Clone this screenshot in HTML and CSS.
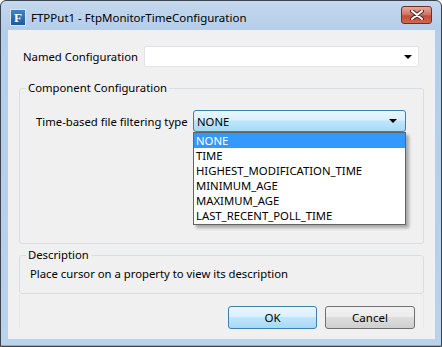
FILE: index.html
```html
<html>
    <head>
        <link rel="stylesheet" href="styles.css">
    </head>
    <body>
        <div class="window">
            <div class="titlebar">
                <span class="appicon">F</span>
                <span class="title">FTPPut1 - FtpMonitorTimeConfiguration</span>
                <span class="close">
                    <svg width="14" height="10" viewBox="0 0 14 10">
                        <path d="M2 1 L12 9 M12 1 L2 9" stroke="#4a2a26" stroke-width="4" stroke-linecap="round"/>
                        <path d="M2 1 L12 9 M12 1 L2 9" stroke="#fff" stroke-width="2" stroke-linecap="round"/>
                    </svg>
                </span>
            </div>

            <div class="client">
                <div class="named">
                    <span class="label">Named Configuration</span>
                    <div class="combo white">
                        <span class="value"></span>
                        <span class="arrow"></span>
                    </div>
                </div>

                <fieldset class="group component">
                    <legend>Component Configuration</legend>
                    <div class="row">
                        <span class="label">Time-based file filtering type</span>
                        <div class="selectwrap">
                            <div class="combo blue">
                                <span class="value">NONE</span>
                                <span class="arrow"></span>
                            </div>
                            <ul class="dropdown">
                                <li class="selected">NONE</li>
                                <li>TIME</li>
                                <li>HIGHEST_MODIFICATION_TIME</li>
                                <li>MINIMUM_AGE</li>
                                <li>MAXIMUM_AGE</li>
                                <li>LAST_RECENT_POLL_TIME</li>
                            </ul>
                        </div>
                    </div>
                </fieldset>

                <fieldset class="group description">
                    <legend>Description</legend>
                    <p>Place cursor on a property to view its description</p>
                </fieldset>

                <div class="buttons">
                    <button class="btn default">OK</button>
                    <button class="btn">Cancel</button>
                </div>
            </div>
        </div>
    </body>
</html>
```

FILE: styles.css
```css
body {
    margin: 0;
    background: #fff;
    font: 11.3px "Noto Sans", "Open Sans", sans-serif;
    color: #000;
}

.window {
    width: 440px;
    height: 345px;
    border: 1px solid #3c4450;
    border-radius: 6px 6px 0 0;
    background: linear-gradient(#c4d8ee, #b4cde9 30px, #bad2ea);
    box-shadow: inset 0 -1px 0 #5fc4d8;
}

.titlebar {
    height: 29px;
    display: flex;
    align-items: center;
    padding: 0 9px 0 9px;
}

.appicon {
    width: 14px;
    height: 15px;
    margin-top: 3px;
    background: linear-gradient(#3b86c8, #1d5a98);
    border: 1px solid #d8e6f4;
    color: #fff;
    font: bold 13px "Liberation Serif", serif;
    line-height: 15px;
    text-align: center;
}

.title {
    margin-left: 5px;
    margin-top: 3px;
    font-size: 11.5px;
    color: #000;
    flex: 1;
}

.close {
    width: 29px;
    height: 16px;
    margin-top: -1px;
    border: 1px solid #6e2f27;
    border-radius: 3px;
    background: linear-gradient(#e7a99c, #d0705f 50%, #c24a37 55%, #cf6a4e);
    display: flex;
    align-items: center;
    justify-content: center;
}

.client {
    margin: 0 6px 0 7px;
    height: 309px;
    background: #f0f0f0;
    padding: 16px 0 0 0;
    box-sizing: border-box;
}

.label {
    white-space: nowrap;
}

.named {
    display: flex;
    align-items: center;
    padding: 0 16px 0 15px;
}

.named .label {
    width: 121px;
}

.combo {
    height: 21px;
    box-sizing: border-box;
    display: flex;
    align-items: center;
    padding: 0 6px 0 3px;
}

.combo .value {
    flex: 1;
}

.arrow {
    width: 0;
    height: 0;
    border-left: 4px solid transparent;
    border-right: 4px solid transparent;
    border-top: 4px solid #000;
}

.white {
    flex: 1;
    background: #fff;
    border: 1px solid #e2e3ea;
    border-radius: 2px;
}

.blue {
    width: 213px;
    height: 22px;
    background: linear-gradient(#eaf6fd, #d9f0fc 45%, #bee6fd 50%, #a7d9f5);
    border: 1px solid #3c7fb1;
    border-radius: 3px;
    padding-right: 8px;
}

.group {
    margin: 13px 11px 0 11px;
    padding: 0;
    border: 1px solid #d5dfe5;
    border-radius: 3px;
}

.group legend {
    margin-left: 6px;
    padding: 0 2px;
    line-height: 16px;
}

.component {
    height: 164px;
    box-sizing: border-box;
}

.row {
    display: flex;
    align-items: center;
    margin-top: 14px;
    padding-left: 16px;
}

.row .label {
    width: 157px;
}

.selectwrap {
    position: relative;
}

.dropdown {
    position: absolute;
    top: 22px;
    left: 0;
    width: 213px;
    box-sizing: border-box;
    margin: 0;
    padding: 0 0 1px 0;
    list-style: none;
    background: #fff;
    border: 1px solid #646464;
    box-shadow: 3px 3px 3px rgba(0, 0, 0, 0.3);
}

.dropdown li {
    height: 15px;
    line-height: 15px;
    padding-left: 2px;
}

.dropdown .selected {
    background: #3399ff;
    color: #fff;
}

.description {
    margin-top: 3px;
    height: 47px;
    box-sizing: border-box;
}

.description p {
    margin: 3px 0 0 10px;
}

.buttons {
    margin: 0 11px;
    height: 35px;
    border-left: 1px solid #e8e8e8;
    border-right: 1px solid #e8e8e8;
    display: flex;
    justify-content: flex-end;
    align-items: flex-end;
    gap: 8px;
    padding-right: 8px;
}

.btn {
    height: 23px;
    width: 90px;
    font: 11.5px "Noto Sans", "Open Sans", sans-serif;
    border: 1px solid #707070;
    border-radius: 3px;
    background: linear-gradient(#f2f2f2, #ebebeb 45%, #dddddd 50%, #cfcfcf);
    padding: 0;
}

.btn.default {
    width: 89px;
    border-color: #3c7fb1;
    background: linear-gradient(#eaf6fd, #d9f0fc 45%, #bee6fd 50%, #a7d9f5);
}
```
